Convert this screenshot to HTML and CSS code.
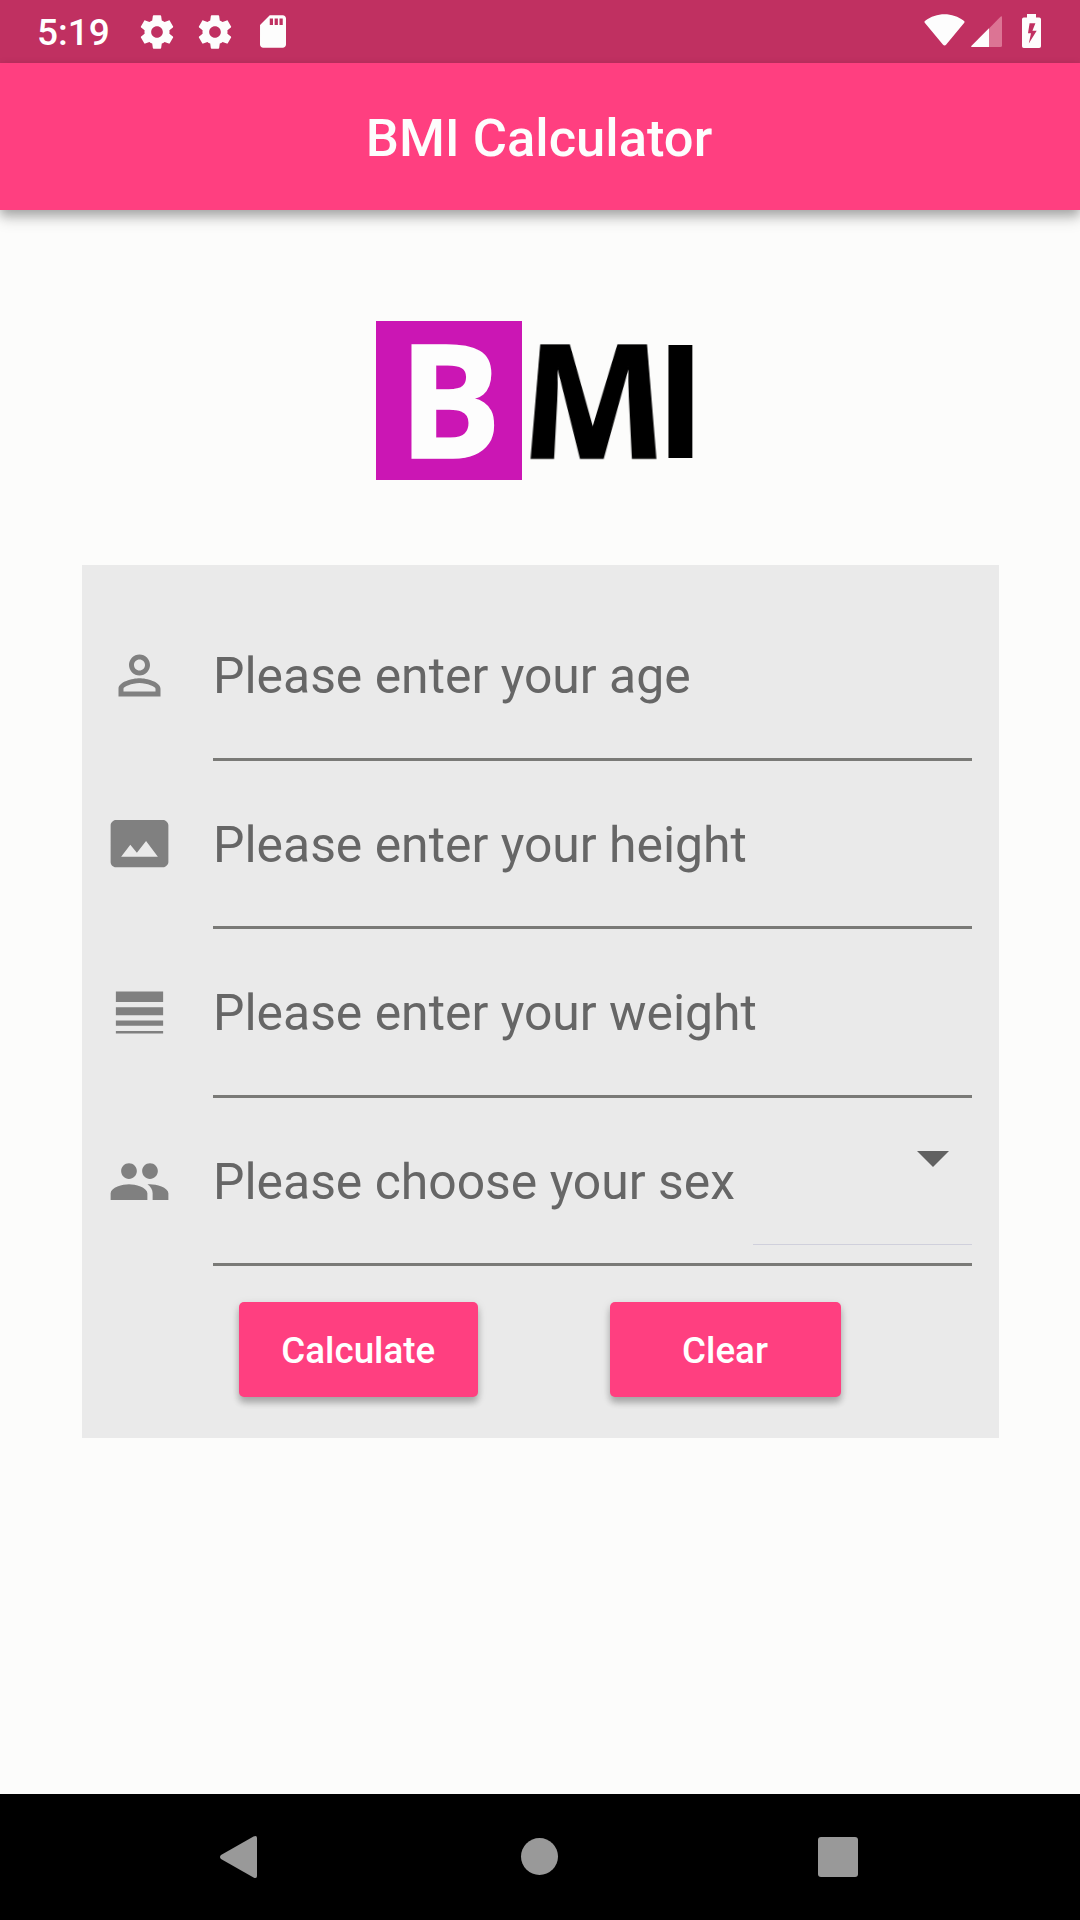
FILE: index.html
```html
<!DOCTYPE html>
<html lang="en">
<head>
<meta charset="utf-8">
<title>BMI Calculator</title>
<link rel="stylesheet" href="styles.css">
</head>
<body>
<div class="screen">
  <div class="status-bar">
    <span class="clock">5:19</span>
    <svg class="gear" viewBox="0 0 24 24"><path d="M19.43 12.98c.04-.32.07-.64.07-.98s-.03-.66-.07-.98l2.11-1.65c.19-.15.24-.42.12-.64l-2-3.46c-.12-.22-.39-.3-.61-.22l-2.49 1c-.52-.4-1.08-.73-1.69-.98l-.38-2.65C14.46 2.18 14.25 2 14 2h-4c-.25 0-.46.18-.49.42l-.38 2.65c-.61.25-1.17.59-1.69.98l-2.49-1c-.23-.09-.49 0-.61.22l-2 3.46c-.13.22-.07.49.12.64l2.11 1.65c-.04.32-.07.65-.07.98s.03.66.07.98l-2.11 1.65c-.19.15-.24.42-.12.64l2 3.46c.12.22.39.3.61.22l2.49-1c.52.4 1.08.73 1.69.98l.38 2.65c.03.24.24.42.49.42h4c.25 0 .46-.18.49-.42l.38-2.65c.61-.25 1.17-.59 1.69-.98l2.49 1c.23.09.49 0 .61-.22l2-3.46c.12-.22.07-.49-.12-.64l-2.11-1.65zM12 15.5c-1.93 0-3.5-1.57-3.5-3.5s1.57-3.5 3.5-3.5 3.5 1.57 3.5 3.5-1.57 3.5-3.5 3.5z"/></svg>
    <svg class="gear gear-second" viewBox="0 0 24 24"><path d="M19.43 12.98c.04-.32.07-.64.07-.98s-.03-.66-.07-.98l2.11-1.65c.19-.15.24-.42.12-.64l-2-3.46c-.12-.22-.39-.3-.61-.22l-2.49 1c-.52-.4-1.08-.73-1.69-.98l-.38-2.65C14.46 2.18 14.25 2 14 2h-4c-.25 0-.46.18-.49.42l-.38 2.65c-.61.25-1.17.59-1.69.98l-2.49-1c-.23-.09-.49 0-.61.22l-2 3.46c-.13.22-.07.49.12.64l2.11 1.65c-.04.32-.07.65-.07.98s.03.66.07.98l-2.11 1.65c-.19.15-.24.42-.12.64l2 3.46c.12.22.39.3.61.22l2.49-1c.52.4 1.08.73 1.69.98l.38 2.65c.03.24.24.42.49.42h4c.25 0 .46-.18.49-.42l.38-2.65c.61-.25 1.17-.59 1.69-.98l2.49 1c.23.09.49 0 .61-.22l2-3.46c.12-.22.07-.49-.12-.64l-2.11-1.65zM12 15.5c-1.93 0-3.5-1.57-3.5-3.5s1.57-3.5 3.5-3.5 3.5 1.57 3.5 3.5-1.57 3.5-3.5 3.5z"/></svg>
    <svg class="sd-card" viewBox="4 2 16 20"><path d="M18 2h-8L4.020 8 4 20c0 1.100.9 2 2 2h12c1.100 0 2-.9 2-2V4c0-1.100-.9-2-2-2zm-6 6h-2V4h2v4zm3 0h-2V4h2v4zm3 0h-2V4h2v4z"/></svg>
    <svg class="wifi" viewBox="0 0 40.500 32"><path d="M1 6.800C12-2 28.500-2 39.500 6.800 40.500 7.600 40.500 8.200 39.800 9.100L22 30.400C21 31.700 19.700 31.700 18.600 30.400L.7 9.100C0 8.200 0 7.600 1 6.800z"/></svg>
    <svg class="signal" viewBox="0 0 31 31"><path class="signal-weak" d="M31 1.500V29.500Q31 31 29.500 31H18V12.500L29.200 1Q31-.5 31 1.500z"/><path d="M18 12.300V31H1.500Q-.8 31 .8 29.400z"/></svg>
    <svg class="battery" viewBox="0 0 19 34"><path fill-rule="evenodd" d="M5 0h9v3.500h3.200Q19 3.500 19 5.300V32.200Q19 34 17.200 34H1.800Q0 34 0 32.200V5.300Q0 3.500 1.800 3.500H5zM7.600 9.200L6 19.200H9L6.800 29.500 14.700 16.700H10.400L13.400 9.200z"/></svg>
  </div>
  <header class="app-bar"><h1 class="title">BMI Calculator</h1></header>
  <main class="content">
    <div class="logo">
      <div class="logo-cell logo-box"><span class="letter-b">B</span></div>
      <div class="logo-cell logo-m"><span class="letter-m">M</span></div>
      <div class="logo-cell logo-i"><span>I</span></div>
    </div>
    <form class="form">
      <div class="row">
        <svg class="row-icon" viewBox="0 0 24 24"><path d="M12 5.900c1.160 0 2.100.94 2.100 2.100s-.94 2.100-2.100 2.100S9.900 9.160 9.900 8s.94-2.100 2.100-2.100m0 9c2.970 0 6.100 1.460 6.100 2.100v1.100H5.900V17c0-.64 3.130-2.100 6.100-2.100M12 4C9.790 4 8 5.790 8 8s1.790 4 4 4 4-1.790 4-4-1.790-4-4-4zm0 9c-2.670 0-8 1.340-8 4v3h16v-3c0-2.660-5.330-4-8-4z"/></svg>
        <div class="field">Please enter your age</div>
      </div>
      <div class="row">
        <svg class="row-icon" viewBox="0 0 24 24"><path d="M21 3H3C2 3 1 4 1 5v14c0 1.100.9 2 2 2h18c1 0 2-1 2-2V5c0-1-1-2-2-2zM5 17l3.500-4.500 2.500 3.010L14.500 11l4.500 6H5z"/></svg>
        <div class="field">Please enter your height</div>
      </div>
      <div class="row">
        <svg class="row-icon" viewBox="0 0 24 24"><path d="M3 17h18v-2H3v2zm0 3h18v-1H3v1zm0-7h18v-3H3v3zm0-9v4h18V4H3z"/></svg>
        <div class="field">Please enter your weight</div>
      </div>
      <div class="row">
        <svg class="row-icon" viewBox="0 0 24 24"><path d="M16 11c1.660 0 2.990-1.340 2.990-3S17.660 5 16 5s-3 1.340-3 3 1.340 3 3 3zm-8 0c1.660 0 2.990-1.340 2.990-3S9.660 5 8 5 5 6.340 5 8s1.340 3 3 3zm0 2c-2.330 0-7 1.170-7 3.500V19h14v-2.500c0-2.330-4.670-3.500-7-3.500zm8 0c-.29 0-.62.020-.97.050 1.160.84 1.970 1.970 1.970 3.450V19h6v-2.500c0-2.330-4.670-3.500-7-3.500z"/></svg>
        <div class="field">
          <span>Please choose your sex</span>
          <div class="dropdown"><svg class="caret" viewBox="0 0 32 16"><path d="M0 0h32L16 16z"/></svg></div>
        </div>
      </div>
      <div class="actions">
        <button class="button calculate" type="button">Calculate</button>
        <button class="button clear" type="button">Clear</button>
      </div>
    </form>
  </main>
  <nav class="nav-bar">
    <svg class="nav-back" viewBox="0 0 37 42"><path d="M33.500.5Q37-1 37 2V40Q37 43 33.500 41.500L1 23Q-1 21 1 19z"/></svg>
    <span class="nav-home"></span>
    <span class="nav-recent"></span>
  </nav>
</div>
</body>
</html>
```
FILE: styles.css
```css
* { box-sizing: border-box; }
body { margin: 0; font-family: Roboto, "Liberation Sans", sans-serif; }
svg { display: block; flex: none; }
.screen {
  width: 1080px;
  height: 1920px;
  display: flex;
  flex-direction: column;
  background: #fcfcfb;
  overflow: hidden;
}
.status-bar {
  height: 63px;
  flex: none;
  display: flex;
  align-items: flex-start;
  padding-left: 37px;
  background: #c03061;
  color: #fff;
  fill: #fdfdfd;
}
.clock { width: 98px; font-size: 37px; font-weight: 500; line-height: 44px; padding-top: 11px; }
.gear { width: 44px; height: 40px; margin-top: 12px; }
.gear-second { margin-left: 14px; }
.sd-card { width: 26px; height: 33px; margin: 15px 0 0 23px; }
.wifi { width: 41px; height: 32px; margin: 14px 0 0 auto; }
.signal { width: 31px; height: 31px; margin: 16px 0 0 6px; }
.signal-weak { fill: #dc7494; }
.battery { width: 19px; height: 34px; margin: 14px 39px 0 20px; }
.app-bar {
  height: 147px;
  flex: none;
  display: flex;
  align-items: center;
  justify-content: center;
  padding: 2px 2px 0 0;
  background: #ff3f80;
  box-shadow: 0 5px 10px rgba(0, 0, 0, .26), 0 10px 14px rgba(0, 0, 0, .12);
}
.title { margin: 0; font-size: 52.500px; font-weight: 500; line-height: 62px; color: #fdfdfd; }
.content { flex: 1; display: flex; flex-direction: column; align-items: center; padding-top: 111px; }
.logo {
  width: 318px;
  height: 159px;
  margin-right: 10px;
  display: flex;
  gap: 10px;
  font: 700 158px/152px "Open Sans", sans-serif;
  color: #000;
}
.logo-cell { display: flex; justify-content: center; }
.logo-box { width: 146px; background: #cb16b4; color: #fdfdfd; }
.logo-m { width: 125px; }
.logo-i { width: 27px; }
.letter-b { padding-left: 3px; transform: scaleX(.97); -webkit-text-stroke: 1.500px #fdfdfd; }
/* Narrows the M towards its top so that the legs splay outwards. */
.letter-m {
  transform-origin: 50% 137px;
  transform: matrix3d(1.030, 0, 0, 0, 0, 1.176, 0, -.00156, 0, 0, 1, 0, -1, 0, 0, 1);
  -webkit-text-stroke: 1.500px #000;
}
.form { width: 917px; height: 873px; margin-top: 85px; padding: 27px 27px 0 26px; background: #eaeaea; }
.row { height: 168.600px; display: flex; align-items: center; gap: 42px; }
.row-icon { width: 63px; height: 63px; margin-bottom: 2px; fill: #808080; }
.field {
  flex: 1;
  height: 100%;
  display: flex;
  justify-content: space-between;
  padding: 54px 0 0 .500px;
  border-bottom: 3px solid #7a7a77;
  font-size: 49.875px;
  line-height: 60px;
  color: #666;
}
.dropdown {
  width: 219px;
  height: 94px;
  margin-top: -1px;
  display: flex;
  justify-content: flex-end;
  border-bottom: 1px solid #d0d0dc;
}
.caret { width: 32px; height: 16px; margin-right: 23px; fill: #616161; }
.actions { display: flex; justify-content: space-between; padding: 36px 131px 0 131.500px; }
.button {
  height: 95px;
  padding: 2px 0 0;
  border: 0;
  border-radius: 5px;
  background: #ff3f80;
  color: #fff;
  font: 500 36.750px/42px Roboto, sans-serif;
  box-shadow: 0 6px 6px rgba(0, 0, 0, .2), 0 3px 10px rgba(0, 0, 0, .15);
}
.calculate { width: 238.500px; }
.clear { width: 231px; }
.nav-bar {
  height: 126px;
  flex: none;
  display: flex;
  align-items: center;
  justify-content: space-between;
  padding: 0 222px 0 220px;
  background: #000;
}
.nav-back { width: 37px; height: 42px; fill: #999; }
.nav-home { width: 37px; height: 37px; margin: 0 0 1px 4px; border-radius: 50%; background: #999; }
.nav-recent { width: 40px; height: 40px; border-radius: 3px; background: #999; }
```
